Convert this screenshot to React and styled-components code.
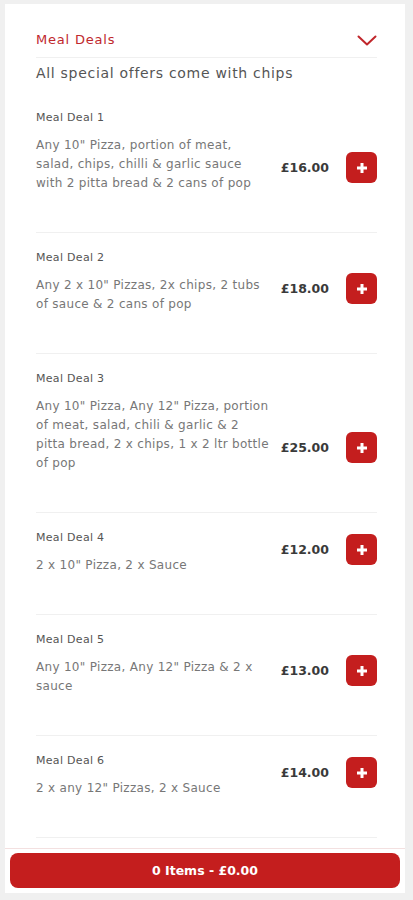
import styled, { createGlobalStyle } from "styled-components";

const deals = [
  { title: "Meal Deal 1", desc: 'Any 10" Pizza, portion of meat, salad, chips, chilli & garlic sauce with 2 pitta bread & 2 cans of pop', price: "£16.00" },
  { title: "Meal Deal 2", desc: 'Any 2 x 10" Pizzas, 2x chips, 2 tubs of sauce & 2 cans of pop', price: "£18.00" },
  { title: "Meal Deal 3", desc: 'Any 10" Pizza, Any 12" Pizza, portion of meat, salad, chili & garlic & 2 pitta bread, 2 x chips, 1 x 2 ltr bottle of pop', price: "£25.00" },
  { title: "Meal Deal 4", desc: '2 x 10" Pizza, 2 x Sauce', price: "£12.00" },
  { title: "Meal Deal 5", desc: 'Any 10" Pizza, Any 12" Pizza & 2 x sauce', price: "£13.00" },
  { title: "Meal Deal 6", desc: '2 x any 12" Pizzas, 2 x Sauce', price: "£14.00" },
];

export default function App() {
  return (
    <>
      <Global />
      <Card>
        <List>
          <Header>
            <Heading>Meal Deals</Heading>
            <svg width="20" height="11" viewBox="0 0 20 11">
              <path d="M1.5 1.5 L10 9.5 L18.5 1.5" fill="none" stroke="#c0262b" strokeWidth="2" strokeLinecap="round" strokeLinejoin="round" />
            </svg>
          </Header>
          <Subtitle>All special offers come with chips</Subtitle>
          {deals.map((d) => (
            <Item key={d.title}>
              <Info>
                <Title>{d.title}</Title>
                <Desc>{d.desc}</Desc>
              </Info>
              <Side>
                <Price>{d.price}</Price>
                <AddButton aria-label="Add">
                  <svg width="12" height="12" viewBox="0 0 12 12">
                    <path d="M6 1 V11 M1 6 H11" stroke="#fff" strokeWidth="3" />
                  </svg>
                </AddButton>
              </Side>
            </Item>
          ))}
        </List>
        <Footer>
          <Basket>0 Items - £0.00</Basket>
        </Footer>
      </Card>
    </>
  );
}

const Global = createGlobalStyle`
  html, body {
    margin: 0;
    background: #f0f0f0;
    font-family: "DejaVu Sans", "Noto Sans", sans-serif;
  }
`;

const Card = styled.div`
  margin: 4px 8px 0 5px;
  height: 889px;
  background: #fff;
  display: flex;
  flex-direction: column;
`;

const List = styled.div`
  flex: 1;
  overflow: hidden;
  padding: 0 28px 0 31px;
`;

const Header = styled.div`
  display: flex;
  justify-content: space-between;
  align-items: center;
  padding: 26px 0 7px;
  border-bottom: 1px solid #f0f0f0;
`;

const Heading = styled.div`
  font-size: 13px;
  line-height: 20px;
  letter-spacing: 0.8px;
  color: #c0282d;
`;

const Subtitle = styled.div`
  margin: 5px 0 10px;
  font-size: 14px;
  line-height: 20px;
  letter-spacing: 0.7px;
  color: #555;
`;

const Item = styled.div`
  display: flex;
  align-items: flex-end;
  justify-content: space-between;
  padding: 18px 0 39px;
  border-bottom: 1px solid #f0f0f0;
`;

const Info = styled.div`
  width: 236px;
`;

const Title = styled.div`
  font-size: 11px;
  line-height: 14px;
  letter-spacing: 0.3px;
  color: #555;
  margin-bottom: 11px;
`;

const Desc = styled.div`
  font-size: 12px;
  line-height: 19px;
  letter-spacing: 0.3px;
  color: #777;
`;

const Side = styled.div`
  display: flex;
  align-items: center;
  gap: 17px;
  margin-bottom: 10px;
`;

const Price = styled.div`
  font-size: 12.5px;
  font-weight: 600;
  color: #3a3a3a;
`;

const AddButton = styled.button`
  width: 31px;
  height: 31px;
  border: none;
  border-radius: 6px;
  background: #c41e1e;
  display: flex;
  align-items: center;
  justify-content: center;
  padding: 0;
`;

const Footer = styled.div`
  border-top: 1px solid #f3e0e0;
  padding: 4px 5px 5px;
`;

const Basket = styled.button`
  width: 100%;
  height: 35px;
  border: none;
  border-radius: 8px;
  background: #c41e1e;
  color: #fff;
  font-family: "DejaVu Sans", "Noto Sans", sans-serif;
  font-size: 12.5px;
  font-weight: 700;
`;
